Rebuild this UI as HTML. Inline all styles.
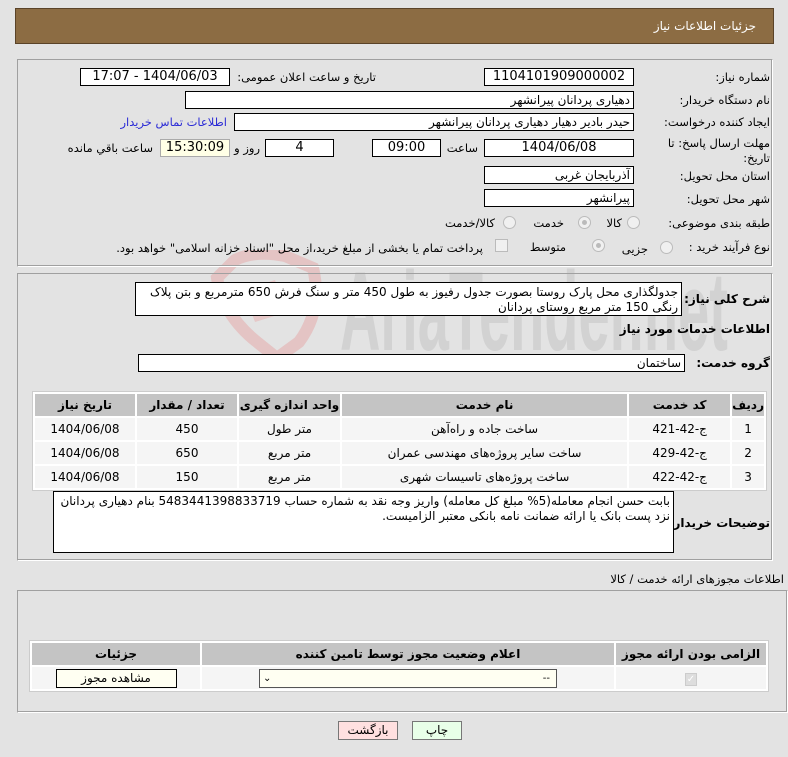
<!DOCTYPE html>
<html><head><meta charset="utf-8"><style>
*{box-sizing:border-box;margin:0;padding:0}
body{width:788px;height:757px;background:#e3e3e3;position:relative;overflow:hidden;font-family:"DejaVu Sans","Liberation Sans",sans-serif;font-size:12px;color:#000}
.a{position:absolute;white-space:nowrap}
.in{position:absolute;background:#fff;border:1px solid #000;height:18px;line-height:16px;font-size:12px;direction:rtl;text-align:right;padding:0 3px;overflow:hidden;white-space:nowrap}
.c{text-align:center}
.lbl{position:absolute;direction:rtl;text-align:right;white-space:nowrap;font-size:11.5px;padding-right:2px}
.pan{position:absolute;border:1px solid #a0a0a0;border-right-color:#fff;border-bottom-color:#fff;box-shadow:inset -1px -1px 0 #a0a0a0}
.rad{position:absolute;width:13px;height:13px;border-radius:50%;border:1px solid #bbb;background:#f0f0f0}
.rad.on::after{content:"";position:absolute;left:3px;top:3px;width:5px;height:5px;border-radius:50%;background:#bbb}
table{position:absolute;border-collapse:separate;border-spacing:2px;background:#fff;border:1px solid #ccc;direction:rtl}
td,th{text-align:center;font-size:12px;height:22px}
th{background:#c4c4c4;font-weight:bold}
td{background:#f5f5f5}
.b{font-weight:bold;font-size:12px}
</style></head><body>

<!-- watermark -->
<svg class="a" style="left:195px;top:250px" width="590" height="110">
<path d="M40 10 Q60 0 90 6 L118 18 Q128 60 104 92 L82 108 L62 92 Q28 65 22 28 Z" fill="none" stroke="#e3bcbc" stroke-width="12" opacity=".8"/>
<path d="M48 40 L80 30 L92 62 L60 72 Z" fill="#e6c0c0" opacity=".8"/>
<text x="145" y="100" font-family="Liberation Sans" font-weight="bold" font-size="112" fill="#d2d2d2" transform="translate(145 0) scale(0.5,1) translate(-145 0)">AriaTender.net</text>
</svg>

<div class="a" style="left:15px;top:8px;width:759px;height:36px;background:#8c6c43;border:1px solid #5a4328"></div>
<div class="lbl" style="right:30px;top:19px;color:#fff;font-size:12px">جزئیات اطلاعات نیاز</div>

<div class="pan" style="left:17px;top:59px;width:756px;height:208px"></div>

<div class="lbl" style="right:16px;top:70px">شماره نیاز:</div>
<div class="in c" style="left:484px;top:68px;width:150px;text-align:center;font-size:13px">1104101909000002</div>
<div class="lbl" style="right:410px;top:70px">تاریخ و ساعت اعلان عمومی:</div>
<div class="in" style="left:80px;top:68px;width:150px;text-align:center;font-size:13px">1404/06/03 - 17:07</div>

<div class="lbl" style="right:16px;top:93px">نام دستگاه خریدار:</div>
<div class="in" style="left:185px;top:91px;width:449px">دهیاری پردانان پیرانشهر</div>

<div class="lbl" style="right:16px;top:115px">ایجاد کننده درخواست:</div>
<div class="in" style="left:234px;top:113px;width:400px">حیدر بادیر دهیار دهیاری پردانان پیرانشهر</div>
<div class="lbl" style="right:559px;top:115px;color:#2b2bd6">اطلاعات تماس خریدار</div>

<div class="lbl" style="right:16px;top:136px;line-height:15px">مهلت ارسال پاسخ: تا<br>تاریخ:</div>
<div class="in" style="left:484px;top:139px;width:150px;text-align:center;font-size:13px">1404/06/08</div>
<div class="lbl" style="right:308px;top:141px">ساعت</div>
<div class="in" style="left:372px;top:139px;width:69px;text-align:center;font-size:13px">09:00</div>
<div class="in" style="left:265px;top:139px;width:69px;text-align:center;font-size:13px">4</div>
<div class="lbl" style="right:526px;top:141px">روز و</div>
<div class="in" style="left:160px;top:139px;width:70px;text-align:center;font-size:13px;background:#ffffe6;border-color:#aaa">15:30:09</div>
<div class="lbl" style="right:633px;top:141px">ساعت باقي مانده</div>

<div class="lbl" style="right:16px;top:169px">استان محل تحویل:</div>
<div class="in" style="left:484px;top:166px;width:150px">آذربایجان غربی</div>
<div class="lbl" style="right:16px;top:192px">شهر محل تحویل:</div>
<div class="in" style="left:484px;top:189px;width:150px">پیرانشهر</div>

<div class="lbl" style="right:16px;top:216px">طبقه بندی موضوعی:</div>
<div class="rad" style="left:627px;top:216px"></div><div class="lbl" style="right:164px;top:216px">کالا</div>
<div class="rad on" style="left:578px;top:216px"></div><div class="lbl" style="right:222px;top:216px">خدمت</div>
<div class="rad" style="left:503px;top:216px"></div><div class="lbl" style="right:291px;top:216px">کالا/خدمت</div>

<div class="lbl" style="right:16px;top:240px">نوع فرآیند خرید :</div>
<div class="rad" style="left:660px;top:241px"></div><div class="lbl" style="right:138px;top:242px">جزیی</div>
<div class="rad on" style="left:592px;top:239px"></div><div class="lbl" style="right:220px;top:240px">متوسط</div>
<div class="a" style="left:495px;top:239px;width:13px;height:13px;border:1px solid #bbb;background:#f0f0f0"></div>
<div class="lbl" style="right:303px;top:241px">پرداخت تمام یا بخشی از مبلغ خرید،از محل "اسناد خزانه اسلامی" خواهد بود.</div>

<div class="pan" style="left:17px;top:273px;width:756px;height:288px"></div>
<div class="lbl b" style="right:16px;top:292px">شرح کلی نیاز:</div>
<div class="in" style="left:135px;top:282px;width:547px;height:34px;line-height:15px;white-space:normal;padding-top:2px;font-size:12px">جدولگذاری محل پارک روستا بصورت جدول رفیوز به طول 450 متر و سنگ فرش 650 مترمربع و بتن پلاک رنگی 150 متر مربع روستای پردانان</div>
<div class="lbl b" style="right:16px;top:322px">اطلاعات خدمات مورد نیاز</div>
<div class="lbl b" style="right:16px;top:356px">گروه خدمت:</div>
<div class="in" style="left:138px;top:354px;width:547px">ساختمان</div>

<table style="left:32px;top:391px;width:735px">
<tr><th style="width:25px">ردیف</th><th style="width:101px">کد خدمت</th><th>نام خدمت</th><th style="width:101px">واحد اندازه گیری</th><th style="width:100px">تعداد / مقدار</th><th style="width:100px">تاریخ نیاز</th></tr>
<tr><td>1</td><td>ج-42-421</td><td>ساخت جاده و راه‌آهن</td><td>متر طول</td><td>450</td><td>1404/06/08</td></tr>
<tr><td>2</td><td>ج-42-429</td><td>ساخت سایر پروژه‌های مهندسی عمران</td><td>متر مربع</td><td>650</td><td>1404/06/08</td></tr>
<tr><td>3</td><td>ج-42-422</td><td>ساخت پروژه‌های تاسیسات شهری</td><td>متر مربع</td><td>150</td><td>1404/06/08</td></tr>
</table>

<div class="lbl b" style="right:16px;top:516px">توضیحات خریدار:</div>
<div class="in" style="left:53px;top:491px;width:621px;height:62px;line-height:15px;white-space:normal;padding-top:2px">بابت حسن انجام معامله(5% مبلغ کل معامله) واریز وجه نقد به شماره حساب 5483441398833719 بنام دهیاری پردانان نزد پست بانک یا ارائه ضمانت نامه بانکی معتبر الزامیست.</div>

<div class="lbl" style="right:2px;top:572px">اطلاعات مجوزهای ارائه خدمت / کالا</div>
<div class="pan" style="left:17px;top:590px;width:771px;height:123px"></div>

<table style="left:29px;top:640px;width:740px">
<tr><th style="width:150px">الزامی بودن ارائه مجوز</th><th>اعلام وضعیت مجوز توسط تامین کننده</th><th style="width:168px">جزئیات</th></tr>
<tr><td><span style="display:inline-block;width:12px;height:13px;background:#ddd;border:1px solid #ccc;color:#fff;font-size:10px;line-height:11px">✓</span></td>
<td><div style="margin:0 auto 0 57px;width:298px;height:19px;border:1px solid #555;background:#fffff2;direction:ltr;text-align:left;font-size:10px;line-height:17px;padding-left:3px;position:relative">⌄<span style="position:absolute;right:6px;top:0">--</span></div></td>
<td><div style="margin:0 auto;width:121px;height:19px;border:1px solid #000;background:#fffff2;line-height:17px">مشاهده مجوز</div></td></tr>
</table>

<div class="a c" style="left:338px;top:721px;width:60px;height:19px;background:#ffe0e0;border:1px solid #777;line-height:17px">بازگشت</div>
<div class="a c" style="left:412px;top:721px;width:50px;height:19px;background:#e8ffe8;border:1px solid #777;line-height:17px">چاپ</div>
</body></html>
